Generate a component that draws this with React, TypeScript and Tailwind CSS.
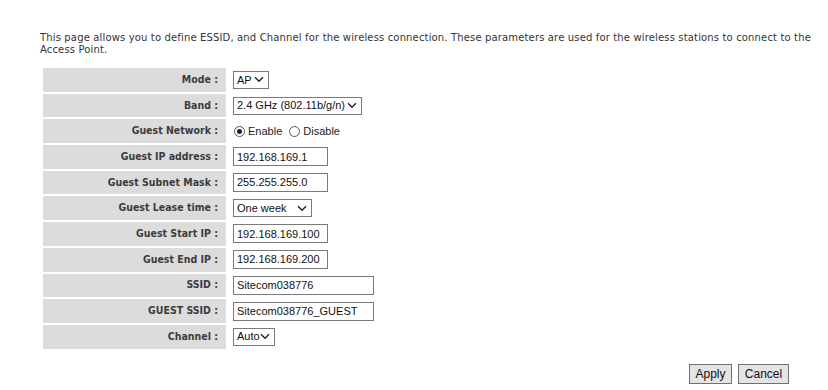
import React from 'react';

// Wireless basic settings form (Sitecom router style)

const labelFont = { fontFamily: '"DejaVu Sans Condensed", "DejaVu Sans", Verdana, sans-serif' };
const introFont = { fontFamily: '"DejaVu Sans", Verdana, sans-serif' };
const ctrlFont = { fontFamily: '"Liberation Sans", Arial, sans-serif' };

const Chevron = () => (
  <svg width="10" height="7" viewBox="0 0 10 7" className="shrink-0">
    <path d="M1 1.2 L5 5.2 L9 1.2" fill="none" stroke="#222" strokeWidth="1.4" />
  </svg>
);

const Select = ({ value, width }: { value: string; width: string }) => (
  <div
    className={`flex items-center justify-between h-[18px] border border-[#7a7a7a] bg-white pl-[3px] pr-[4px] text-[11px] text-[#111] ${width}`}
    style={ctrlFont}
  >
    <span className="whitespace-nowrap">{value}</span>
    <Chevron />
  </div>
);

const Input = ({ value, width }: { value: string; width: string }) => (
  <div
    className={`flex items-center h-[19px] border border-[#7a7a7a] bg-white pl-[3px] text-[11px] text-[#111] ${width}`}
    style={ctrlFont}
  >
    <span className="whitespace-nowrap">{value}</span>
  </div>
);

const Radio = ({ checked, label }: { checked?: boolean; label: string }) => (
  <div className="flex items-center gap-[3px]">
    <span className="flex items-center justify-center w-[11px] h-[11px] rounded-full border border-[#555] bg-white">
      {checked && <span className="w-[5px] h-[5px] rounded-full bg-[#222]" />}
    </span>
    <span className="text-[11px] text-[#222]" style={ctrlFont}>{label}</span>
  </div>
);

const Row = ({ label, children }: { label: string; children: React.ReactNode }) => (
  <div className="flex h-[23.7px] gap-[7px]">
    <div
      className="w-[183px] bg-[#dcdcdc] flex items-center justify-end pr-[8px] text-[10.5px] font-bold text-[#3c3c3c]"
      style={labelFont}
    >
      {label}
    </div>
    <div className="flex items-center">{children}</div>
  </div>
);

export default function App() {
  return (
    <div className="w-[828px] h-[390px] bg-white relative">
      <div
        className="pl-[40px] pr-[6px] pt-[32px] text-[10px] leading-[12px] tracking-[0.15px] text-[#333]"
        style={introFont}
      >
        This page allows you to define ESSID, and Channel for the wireless connection. These parameters are used for the wireless stations to connect to the Access Point.
      </div>

      <div className="flex flex-col gap-[2px] pl-[43px] pt-[12px]">
        <Row label="Mode :">
          <Select value="AP" width="w-[36px]" />
        </Row>
        <Row label="Band :">
          <Select value="2.4 GHz (802.11b/g/n)" width="w-[129px]" />
        </Row>
        <Row label="Guest Network :">
          <div className="flex items-center gap-[7px] pl-[1px]">
            <Radio checked label="Enable" />
            <Radio label="Disable" />
          </div>
        </Row>
        <Row label="Guest IP address :">
          <Input value="192.168.169.1" width="w-[95px]" />
        </Row>
        <Row label="Guest Subnet Mask :">
          <Input value="255.255.255.0" width="w-[95px]" />
        </Row>
        <Row label="Guest Lease time :">
          <Select value="One week" width="w-[79px]" />
        </Row>
        <Row label="Guest Start IP :">
          <Input value="192.168.169.100" width="w-[95px]" />
        </Row>
        <Row label="Guest End IP :">
          <Input value="192.168.169.200" width="w-[95px]" />
        </Row>
        <Row label="SSID :">
          <Input value="Sitecom038776" width="w-[141px]" />
        </Row>
        <Row label="GUEST SSID :">
          <Input value="Sitecom038776_GUEST" width="w-[141px]" />
        </Row>
        <Row label="Channel :">
          <Select value="Auto" width="w-[42px]" />
        </Row>
      </div>

      <div className="flex justify-end gap-[6px] pr-[39px] pt-[15px]">
        <button
          className="h-[20px] w-[43px] border border-[#707070] bg-[#e4e4e4] text-[12px] text-[#111]"
          style={ctrlFont}
        >
          Apply
        </button>
        <button
          className="h-[20px] w-[51px] border border-[#707070] bg-[#e4e4e4] text-[12px] text-[#111]"
          style={ctrlFont}
        >
          Cancel
        </button>
      </div>
    </div>
  );
}
